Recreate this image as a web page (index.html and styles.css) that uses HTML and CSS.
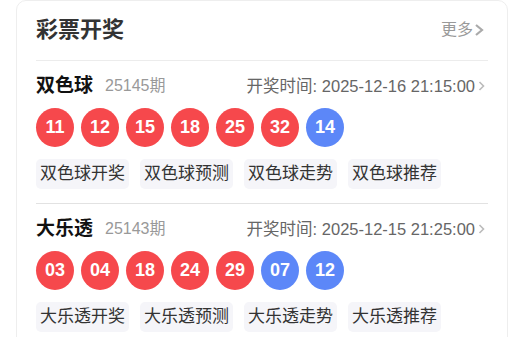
FILE: index.html
```html
<!DOCTYPE html>
<html lang="zh-CN">
<head>
  <meta charset="UTF-8">
  <title>彩票开奖</title>
  <link rel="stylesheet" href="styles.css">
</head>
<body>

<div class="card">
  <div class="card-head">
    <h2>彩票开奖</h2>
    <a class="more">更多<svg class="chev" width="10" height="12" viewBox="0 0 10 12"><polyline points="2,1 8,6 2,11" fill="none" stroke="#aaa" stroke-width="2.2"/></svg></a>
  </div>

  <div class="lotto">
    <div class="lotto-head">
      <span class="name">双色球</span>
      <span class="issue">25145期</span>
      <span class="time">开奖时间: 2025-12-16 21:15:00<svg class="chev small" width="7" height="10" viewBox="0 0 7 10"><polyline points="1.5,1 5.5,5 1.5,9" fill="none" stroke="#bbb" stroke-width="1.6"/></svg></span>
    </div>
    <div class="balls">
      <span class="ball red">11</span>
      <span class="ball red">12</span>
      <span class="ball red">15</span>
      <span class="ball red">18</span>
      <span class="ball red">25</span>
      <span class="ball red">32</span>
      <span class="ball blue">14</span>
    </div>
    <div class="tags">
      <span class="tag">双色球开奖</span>
      <span class="tag">双色球预测</span>
      <span class="tag">双色球走势</span>
      <span class="tag">双色球推荐</span>
    </div>
  </div>

  <div class="lotto">
    <div class="lotto-head">
      <span class="name">大乐透</span>
      <span class="issue">25143期</span>
      <span class="time">开奖时间: 2025-12-15 21:25:00<svg class="chev small" width="7" height="10" viewBox="0 0 7 10"><polyline points="1.5,1 5.5,5 1.5,9" fill="none" stroke="#bbb" stroke-width="1.6"/></svg></span>
    </div>
    <div class="balls">
      <span class="ball red">03</span>
      <span class="ball red">04</span>
      <span class="ball red">18</span>
      <span class="ball red">24</span>
      <span class="ball red">29</span>
      <span class="ball blue">07</span>
      <span class="ball blue">12</span>
    </div>
    <div class="tags">
      <span class="tag">大乐透开奖</span>
      <span class="tag">大乐透预测</span>
      <span class="tag">大乐透走势</span>
      <span class="tag">大乐透推荐</span>
    </div>
  </div>
</div>

</body>
</html>
```

FILE: styles.css
```css
body { margin: 0; background: #fff; font-family: "Liberation Sans", Arial, "Noto Sans CJK SC", sans-serif; color: #333; }
.card { margin: 0 8px 0 16px; border: 1px solid #eee; border-radius: 10px; padding: 0 19px; height: 400px; }
.card-head { display: flex; align-items: center; justify-content: space-between; padding: 17px 0 18px; border-bottom: 1px solid #ececec; }
.card-head h2 { margin: 0; font-size: 22px; line-height: 24px; font-weight: bold; color: #333; }
.more { font-size: 16px; line-height: 24px; color: #999; display: flex; align-items: center; padding-right: 4px; }
.chev { display: block; margin-left: 1px; }
.chev.small { margin-left: 3px; }
.lotto { padding: 13px 0 14px; border-bottom: 1px solid #e2e2e2; }
.lotto-head { display: flex; align-items: center; height: 24px; }
.name { font-size: 19px; line-height: 24px; font-weight: bold; color: #111; }
.issue { font-size: 16px; line-height: 24px; color: #999; margin-left: 12px; }
.time { margin-left: auto; font-size: 16.5px; line-height: 24px; color: #666; display: flex; align-items: center; padding-right: 3px; }
.balls { display: flex; gap: 7px; margin-top: 10px; }
.ball { width: 38px; height: 39px; border-radius: 50%; color: #fff; font-size: 18px; font-weight: bold; display: flex; align-items: center; justify-content: center; }
.ball.red { background: #f6484c; }
.ball.blue { background: #5c87f8; }
.tags { display: flex; gap: 11px; margin-top: 12px; }
.tag { height: 30px; line-height: 30px; padding: 0 4px; background: #f5f5f9; border-radius: 5px; font-size: 17px; color: #333; }
```
